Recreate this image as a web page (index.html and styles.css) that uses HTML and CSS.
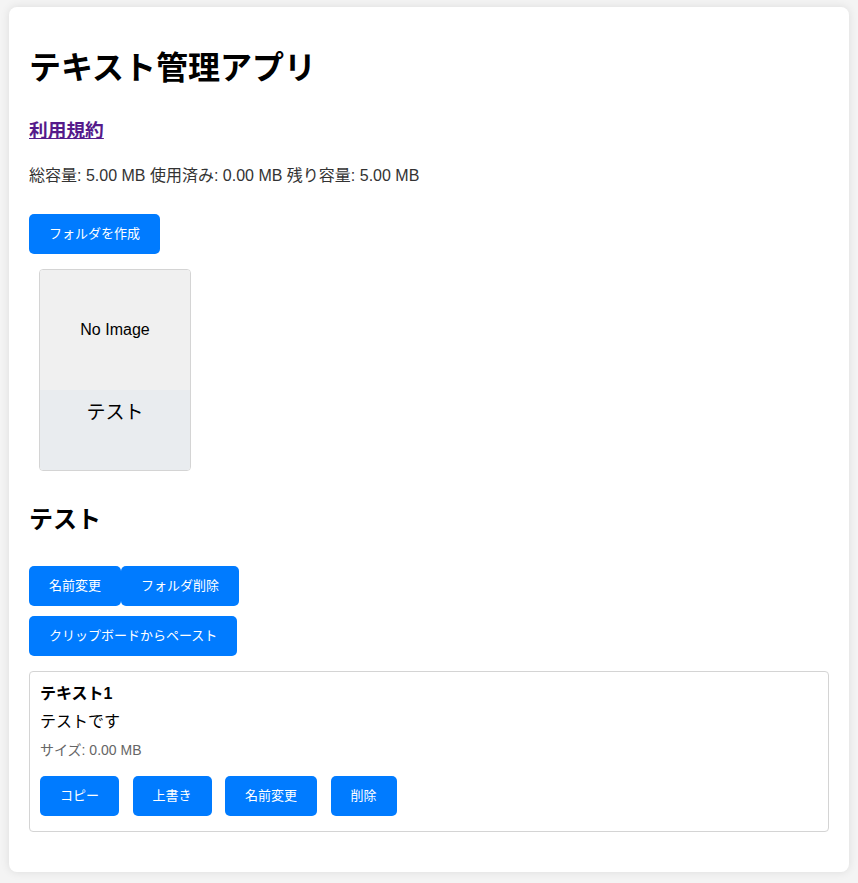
FILE: index.html
```html
<!DOCTYPE html>
<html lang="ja">
<head>
<meta charset="utf-8">
<title>テキスト管理アプリ</title>
<link rel="stylesheet" href="styles.css">
</head>
<body>
<div class="container">
  <h1 class="app-title">テキスト管理アプリ</h1>
  <h3 class="terms"><a href="#" class="terms-link">利用規約</a></h3>
  <p class="storage">総容量: 5.00 MB 使用済み: 0.00 MB 残り容量: 5.00 MB</p>
  <div class="toolbar"><button class="btn">フォルダを作成</button></div>
  <div class="folder-grid">
    <div class="folder-card">
      <div class="folder-thumb">No Image</div>
      <div class="folder-name">テスト</div>
    </div>
  </div>
  <h2 class="folder-title">テスト</h2>
  <div class="folder-actions">
    <div class="btn-row"><button class="btn">名前変更</button><button class="btn">フォルダ削除</button></div>
    <div class="btn-row"><button class="btn">クリップボードからペースト</button></div>
  </div>
  <div class="text-list">
    <div class="text-item">
      <h4 class="text-title">テキスト1</h4>
      <p class="text-body">テストです</p>
      <p class="text-size">サイズ: 0.00 MB</p>
      <div class="item-actions">
        <button class="btn">コピー</button>
        <button class="btn">上書き</button>
        <button class="btn">名前変更</button>
        <button class="btn">削除</button>
      </div>
    </div>
  </div>
</div>
</body>
</html>
```
FILE: styles.css
```css
html, body {
  margin: 0;
  padding: 0;
}
body {
  background: #f4f4f4;
  font-family: "Liberation Sans", "Noto Sans CJK JP", sans-serif;
  color: #000;
  padding: 7px 9px 11px;
}
.container {
  background: #fff;
  border-radius: 8px;
  box-shadow: 0 0 10px rgba(0, 0, 0, 0.1);
  padding: 20px;
}
.app-title {
  margin: 21px 0 0;
  font-size: 32px;
  line-height: 40px;
  font-weight: bold;
}
.terms {
  margin: 31px 0 0;
  font-size: 18.72px;
  line-height: 24px;
  font-weight: bold;
}
.terms-link {
  color: #551a8b;
  text-decoration: underline;
}
.storage {
  margin: 22px 0 0;
  font-size: 16px;
  line-height: 22px;
  color: #333;
}
.toolbar {
  margin-top: 27px;
  display: flex;
}
.btn {
  font-family: inherit;
  font-size: 13px;
  line-height: 20px;
  padding: 10px 20px;
  background: #007bff;
  color: #fff;
  border: none;
  border-radius: 5px;
  cursor: pointer;
  margin: 0;
}
.folder-grid {
  margin-top: 5px;
  display: flex;
  flex-wrap: wrap;
}
.folder-card {
  box-sizing: border-box;
  width: 152px;
  height: 202px;
  margin: 10px;
  border: 1px solid #d4d4d4;
  border-radius: 4px;
  overflow: hidden;
  display: flex;
  flex-direction: column;
}
.folder-thumb {
  height: 120px;
  background: #f0f0f0;
  display: flex;
  align-items: center;
  justify-content: center;
  font-size: 16px;
}
.folder-name {
  flex: 1;
  background: #e9ecef;
  text-align: center;
  padding-top: 10px;
  font-size: 19px;
  line-height: 26px;
}
.folder-title {
  margin: 24px 0 0;
  font-size: 24px;
  line-height: 30px;
  font-weight: bold;
}
.folder-actions {
  margin-top: 31px;
  display: flex;
  flex-direction: column;
  gap: 10px;
}
.btn-row {
  display: flex;
}
.text-list {
  margin-top: 15px;
}
.text-item {
  border: 1px solid #d4d4d4;
  border-radius: 4px;
  padding: 10px 10px 15px;
  margin-bottom: 20px;
}
.text-title {
  margin: 0;
  font-size: 16px;
  line-height: 24px;
  font-weight: bold;
}
.text-body {
  margin: 4px 0 0;
  font-size: 16px;
  line-height: 24px;
}
.text-size {
  margin: 6px 0 0;
  font-size: 14px;
  line-height: 20px;
  color: #666;
}
.item-actions {
  margin-top: 16px;
  display: flex;
  gap: 13.5px;
}
```
